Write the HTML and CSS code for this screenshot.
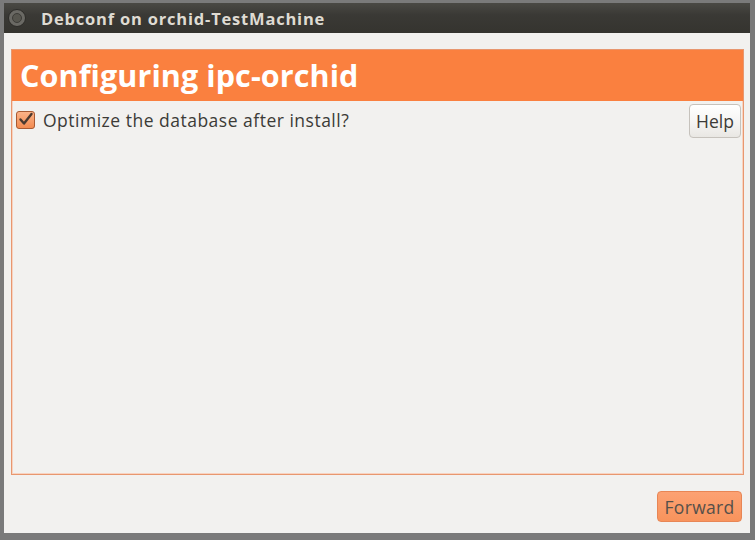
FILE: index.html
```html
<!DOCTYPE html>
<html lang="en">
<head>
 <meta charset="UTF-8">
 <title>Debconf on orchid-TestMachine</title>
 <link rel="stylesheet" href="styles.css">
</head>
<body>
<div class="window">
 <div class="titlebar">
  <span class="close_btn"><span class="close_dot"></span></span>
  <span class="title">Debconf on orchid-TestMachine</span>
 </div>
 <div class="win_body">
  <div class="frame">
   <h1 class="heading">Configuring ipc-orchid</h1>
   <div class="question">
    <label class="check_label">
     <svg class="checkbox" width="19" height="18" viewBox="0 0 19 18">
      <defs>
       <linearGradient id="cbfill" x1="0" y1="0" x2="0" y2="1">
        <stop offset="0" stop-color="#fbb48a"/>
        <stop offset="1" stop-color="#f28a4f"/>
       </linearGradient>
      </defs>
      <rect x="0.5" y="0.5" width="18" height="17" rx="2.5" fill="url(#cbfill)" stroke="#a85a33"/>
      <path d="M4.5 8.5 L8 12.5 L15.5 3" fill="none" stroke="#4b3a30" stroke-width="2.4" stroke-linecap="round" stroke-linejoin="round"/>
     </svg>
     <span>Optimize the database after install?</span>
    </label>
    <button type="button" class="btn btn_help">Help</button>
   </div>
  </div>
  <div class="actions">
   <button type="button" class="btn btn_forward">Forward</button>
  </div>
 </div>
</div>
</body>
</html>
```
FILE: styles.css
```css
html, body{
  margin: 0;
  height: 100%;
}
body{
  background: #7a7a7a;
  font-family: "Open Sans", "DejaVu Sans", sans-serif;
}
.window{
  margin: 3px 5px 0 4px;
  height: 530px;
  display: flex;
  flex-direction: column;
  background: #f2f1ef;
}
.titlebar{
  height: 30px;
  flex: none;
  display: flex;
  align-items: center;
  background: linear-gradient(#4a4944, #3a3935 40%, #35342f);
  color: #dfdbd2;
}
.close_btn{
  width: 16px;
  height: 16px;
  margin-left: 4px;
  border-radius: 50%;
  background: #6a6964;
  border: 1px solid #2c2b28;
  display: flex;
  align-items: center;
  justify-content: center;
}
.close_dot{
  width: 8px;
  height: 8px;
  border-radius: 50%;
  background: #57564f;
  border: 1px solid #3d3c38;
}
.title{
  margin-left: 15px;
  font-weight: bold;
  font-size: 16.5px;
  letter-spacing: 0.8px;
}
.win_body{
  flex: 1;
  display: flex;
  flex-direction: column;
  padding: 16px 6px 11px 7px;
}
.frame{
  height: 424px;
  border: 1px solid #e8976f;
  box-shadow: inset 0 0 0 1px #f8d3c0;
  display: flex;
  flex-direction: column;
}
.heading{
  margin: 0;
  height: 51px;
  background: #fa803f;
  color: #fff;
  font-size: 30.5px;
  font-weight: bold;
  line-height: 51px;
  padding-left: 8px;
  letter-spacing: 0.1px;
}
.question{
  display: flex;
  align-items: flex-start;
  justify-content: space-between;
  padding: 3px 2px 0 4px;
}
.check_label{
  display: flex;
  align-items: center;
  gap: 8px;
  margin-top: 4px;
  font-size: 17.5px;
  letter-spacing: 0.5px;
  color: #3c3b37;
}
.btn{
  font-family: inherit;
  font-size: 17.5px;
  color: #3c3b37;
  border-radius: 4px;
  padding: 0;
}
.btn_help{
  width: 52px;
  height: 34px;
  background: linear-gradient(#ffffff, #f4f3f1 60%, #e9e7e3);
  border: 1px solid #c6c2bc;
}
.actions{
  margin-top: auto;
  display: flex;
  justify-content: flex-end;
  padding-right: 2px;
}
.btn_forward{
  width: 85px;
  height: 31px;
  background: linear-gradient(#fca273, #f8935c);
  border: 1px solid #e88655;
  color: #55504a;
  letter-spacing: 0.3px;
}
```
